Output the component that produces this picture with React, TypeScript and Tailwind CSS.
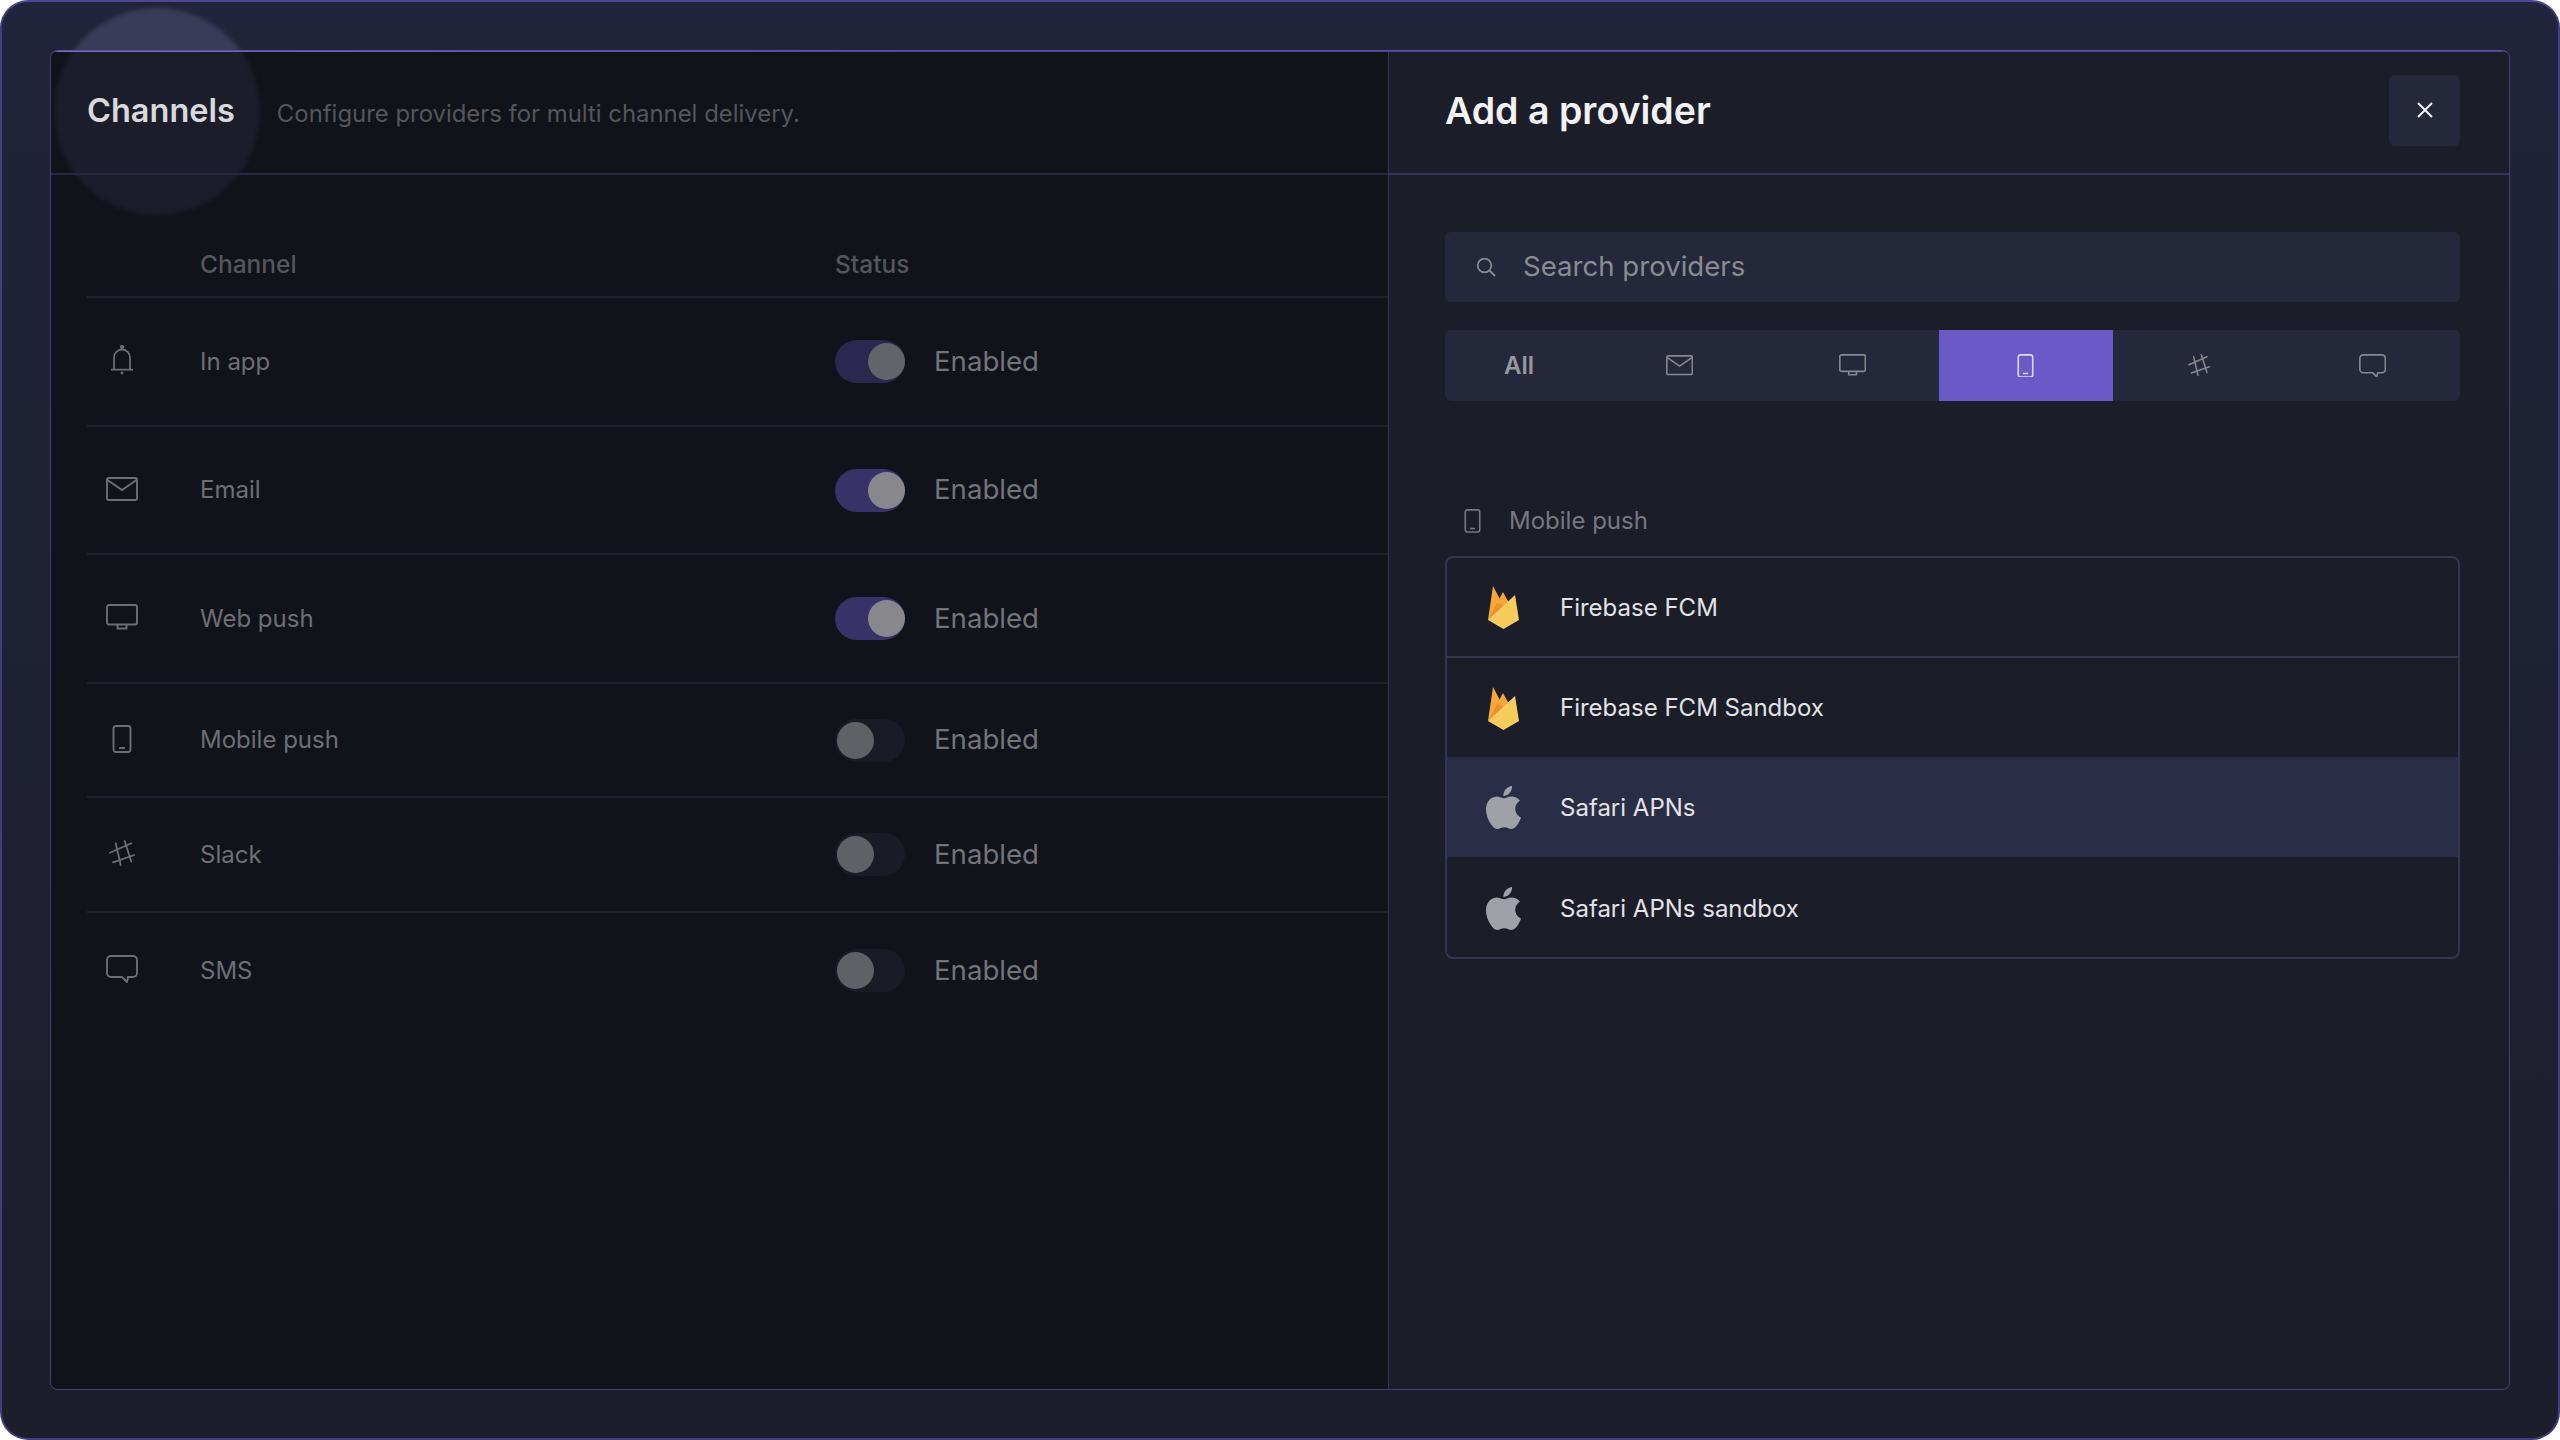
import React from "react";

type IconProps = { className?: string };

function Bell({ className }: IconProps) {
  return (
    <svg viewBox="0 0 22 30" width="22" height="30" fill="none" stroke="currentColor" strokeWidth="1.8" className={className}>
      <circle cx="11" cy="2" r="1.2" fill="currentColor" />
      <path d="M3 24V12.5a8 8 0 0 1 16 0V24" />
      <path d="M0.5 24.6h21" strokeLinecap="round" />
      <circle cx="11" cy="28" r="1.4" fill="currentColor" stroke="none" />
    </svg>
  );
}
function Mail({ className, s = 1 }: IconProps & { s?: number }) {
  return (
    <svg viewBox="0 0 32 24" width={32 * s} height={24 * s} fill="none" stroke="currentColor" strokeWidth="1.9" className={className}>
      <rect x="1" y="1" width="30" height="22" rx="1.5" />
      <path d="M1.5 3l14.5 10L30.5 3" />
    </svg>
  );
}
function Monitor({ className, s = 1 }: IconProps & { s?: number }) {
  return (
    <svg viewBox="0 0 32 26" width={32 * s} height={26 * s} fill="none" stroke="currentColor" strokeWidth="1.9" className={className}>
      <rect x="1" y="1" width="30" height="19.5" rx="2" />
      <path d="M11.5 20.5v4h9v-4" />
    </svg>
  );
}
function Phone({ className, s = 1 }: IconProps & { s?: number }) {
  return (
    <svg viewBox="0 0 20 28" width={20 * s} height={28 * s} fill="none" stroke="currentColor" strokeWidth="1.9" className={className}>
      <rect x="1.5" y="1" width="17" height="26" rx="2.5" />
      <path d="M7 23h6" />
    </svg>
  );
}
function Hash({ className, s = 1 }: IconProps & { s?: number }) {
  return (
    <svg viewBox="0 0 26 26" width={26 * s} height={26 * s} fill="none" stroke="currentColor" strokeWidth="1.8" strokeLinecap="round" className={className}>
      <path d="M6.7 3.3L11.7 25M15.7 1L22.3 21.7M1 12.7L22.3 3.3M4 22.3L25.2 15" />
    </svg>
  );
}
function Chat({ className, s = 1 }: IconProps & { s?: number }) {
  return (
    <svg viewBox="0 0 32 28" width={32 * s} height={28 * s} fill="none" stroke="currentColor" strokeWidth="1.9" strokeLinejoin="round" className={className}>
      <path d="M5 1h22a4 4 0 0 1 4 4v13a4 4 0 0 1-4 4h-5l-1 5-5-5H5a4 4 0 0 1-4-4V5a4 4 0 0 1 4-4z" />
    </svg>
  );
}
function Firebase() {
  return (
    <svg viewBox="0 0 31 43" width="31" height="43">
      <path d="M0 34L5 0l9.5 18z" fill="#f6a938" />
      <path d="M0 34L15 6l6 11z" fill="#f5a73a" />
      <path d="M0 34L9 17l6 2-3 7z" fill="#ee8f2e" />
      <path d="M0 34L27 9l4 25-15.5 9z" fill="#f8cb5d" />
    </svg>
  );
}
function Apple() {
  return (
    <svg viewBox="0 0 24 24" width="43" height="43" fill="#a0a0a8">
      <path d="M12.152 6.896c-.948 0-2.415-1.078-3.96-1.04-2.04.027-3.91 1.183-4.961 3.014-2.117 3.675-.546 9.103 1.519 12.09 1.013 1.454 2.208 3.09 3.792 3.039 1.52-.065 2.09-.987 3.935-.987 1.831 0 2.35.987 3.96.948 1.637-.026 2.676-1.48 3.676-2.948 1.156-1.688 1.636-3.325 1.662-3.415-.039-.013-3.182-1.221-3.22-4.857-.026-3.04 2.48-4.494 2.597-4.559-1.429-2.09-3.623-2.324-4.39-2.376-2-.156-3.675 1.09-4.61 1.09zM15.53 3.83c.843-1.012 1.4-2.427 1.245-3.83-1.207.052-2.662.805-3.532 1.818-.78.896-1.454 2.338-1.273 3.714 1.338.104 2.715-.688 3.559-1.701" />
    </svg>
  );
}

const rows = [
  { name: "In app", icon: <Bell />, on: 1, h: "h-[129px]" },
  { name: "Email", icon: <Mail />, on: 2, h: "h-[128px]" },
  { name: "Web push", icon: <Monitor />, on: 2, h: "h-[129px]" },
  { name: "Mobile push", icon: <Phone />, on: 0, h: "h-[114px]" },
  { name: "Slack", icon: <Hash />, on: 0, h: "h-[115px]" },
  { name: "SMS", icon: <Chat />, on: 0, h: "h-[115px]" },
];

function Toggle({ on }: { on: number }) {
  if (on === 0) {
    return (
      <div className="flex h-[43px] w-[70px] items-center rounded-full bg-[#191c27] pl-[2px]">
        <div className="h-[37px] w-[37px] rounded-full bg-[#606166]" />
      </div>
    );
  }
  return (
    <div className={on === 1 ? "flex h-[43px] w-[70px] items-center justify-end rounded-full bg-[#2a2750]" : "flex h-[43px] w-[70px] items-center justify-end rounded-full bg-[#383269]"}>
      <div className={on === 1 ? "h-[37px] w-[37px] rounded-full bg-[#636469]" : "h-[37px] w-[37px] rounded-full bg-[#88888c]"} />
    </div>
  );
}

const providers = [
  { name: "Firebase FCM", icon: <Firebase />, cls: "h-[100px] border-b-2 border-[#33364f] pt-[1px]" },
  { name: "Firebase FCM Sandbox", icon: <Firebase />, cls: "h-[99px] pt-[1px]" },
  { name: "Safari APNs", icon: <Apple />, cls: "h-[100px] bg-[#292d45] pt-[1px]" },
  { name: "Safari APNs sandbox", icon: <Apple />, cls: "h-[100px] pt-[3px]" },
];

export default function App() {
  return (
    <div className="bg-white font-['Inter',sans-serif]">
      <div className="relative box-border flex h-[1440px] w-[2560px] overflow-hidden rounded-[28px] border-2 border-[#453c7c] border-t-[#51459a] bg-gradient-to-b from-[#21243a] to-[#1c1e2c] p-[48px]">
        <div className="absolute left-[52px] top-[6px] h-[208px] w-[206px] rounded-full bg-[#393c58] blur-[2px]" />
        <div className="relative flex min-w-0 flex-1 overflow-hidden rounded-[8px] border-[1.5px] border-[#453e7e] border-t-[#5a4fa0]">
          <div className="absolute left-0 right-0 top-0 z-10 h-[1px] bg-gradient-to-r from-[#7a70c4] to-[#4f4592] to-[35%]" />
          <div className="relative flex w-[1337px] flex-col overflow-hidden bg-[#10131a]">
            <div className="absolute left-[3px] top-[-44px] h-[208px] w-[206px] rounded-full bg-[#1b1d2a] blur-[2px]" />
            <div className="relative flex h-[124px] items-center border-b-2 border-[#272941] pb-[2px] pl-[36px]">
              <h1 className="text-[32.5px] font-semibold text-[#d9d9dd]">Channels</h1>
              <p className="ml-[42px] mt-[5px] text-[23.9px] text-[#55565c]">Configure providers for multi channel delivery.</p>
            </div>
            <div className="flex flex-col pl-[36px]">
              <div className="grid h-[123px] grid-cols-[113px_635px_1fr] border-b-2 border-[#1f2130] pt-[72px] text-[24.5px] font-medium leading-[34px] text-[#55565c]">
                <div />
                <div>Channel</div>
                <div>Status</div>
              </div>
              {rows.map((r, i) => (
                <div key={r.name} className={`grid ${r.h} grid-cols-[113px_635px_1fr] items-center ${i < 5 ? "border-b-2 border-[#1f2130]" : ""}`}>
                  <div className="-mt-[3px] flex w-[70px] justify-center text-[#6d6e73]">{r.icon}</div>
                  <div className="text-[24px] text-[#6e6f74]">{r.name}</div>
                  <div className="flex items-center gap-[29px]">
                    <Toggle on={r.on} />
                    <span className="text-[27.6px] text-[#737479]">Enabled</span>
                  </div>
                </div>
              ))}
            </div>
          </div>

          <div className="flex min-w-0 flex-1 flex-col border-l-[1.5px] border-[#33355a] bg-[#1b1d29]">
            <div className="flex h-[124px] items-center justify-between border-b-2 border-[#33365a] pb-[4px] pl-[56px] pr-[49px]">
              <h2 className="mt-[3px] text-[37.5px] font-semibold text-[#f2f2f4]">Add a provider</h2>
              <button className="flex h-[71px] w-[71px] items-center justify-center rounded-[6px] bg-[#25283a] text-[#f2f2f4]">
                <svg viewBox="0 0 18 18" width="18" height="18" fill="none" stroke="currentColor" strokeWidth="2">
                  <path d="M2 2l14 14M16 2L2 16" />
                </svg>
              </button>
            </div>
            <div className="flex flex-col pl-[56px] pr-[49px] pt-[57px]">
              <div className="flex h-[70px] items-center rounded-[6px] bg-[#25283a] pl-[31px]">
                <svg viewBox="0 0 20 20" width="20" height="20" fill="none" stroke="#8a8a90" strokeWidth="1.8">
                  <circle cx="8.5" cy="8.5" r="6.8" />
                  <path d="M13.5 13.5L19 19" />
                </svg>
                <span className="ml-[27px] text-[27.6px] text-[#8b8b92]">Search providers</span>
              </div>
              <div className="mt-[28px] flex h-[71px] overflow-hidden rounded-[6px] bg-[#25283a] text-[#87878d]">
                <div className="flex w-[148px] items-center justify-center text-[24px] font-semibold text-[#98989f]">All</div>
                <div className="flex w-[173.2px] items-center justify-center"><Mail s={0.85} /></div>
                <div className="flex w-[173.2px] items-center justify-center"><Monitor s={0.85} /></div>
                <div className="flex w-[173.2px] items-center justify-center bg-[#6a59c6] text-[#dcd8f8]"><Phone s={0.85} /></div>
                <div className="flex w-[173.2px] items-center justify-center"><Hash s={0.85} /></div>
                <div className="flex w-[173.2px] items-center justify-center"><Chat s={0.85} /></div>
              </div>
              <div className="mt-[105px] flex h-[30px] items-center pl-[19px] text-[#77787e]">
                <Phone s={0.85} />
                <span className="ml-[28px] text-[24px]">Mobile push</span>
              </div>
              <div className="mt-[20px] overflow-hidden rounded-[8px] border-2 border-[#33364f]">
                {providers.map((p) => (
                  <div key={p.name} className={`flex items-center ${p.cls}`}>
                    <div className="flex w-[113px] justify-center">{p.icon}</div>
                    <span className="text-[24px] text-[#e3e3e7]">{p.name}</span>
                  </div>
                ))}
              </div>
            </div>
          </div>
        </div>
      </div>
    </div>
  );
}
